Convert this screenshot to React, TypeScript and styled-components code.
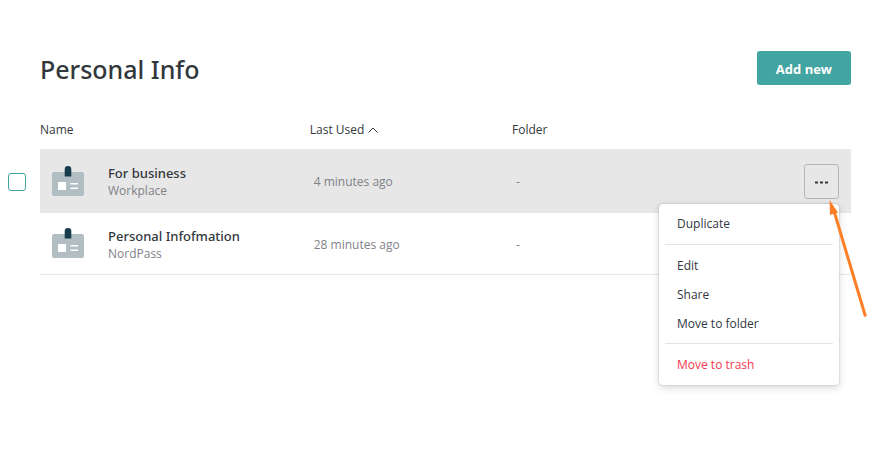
import React from "react";
import styled, { createGlobalStyle } from "styled-components";

const headingFont = '"Noto Sans", "Open Sans", sans-serif';

const GlobalStyle = createGlobalStyle`
  * { box-sizing: border-box; }
  body {
    margin: 0;
    background: #fff;
    color: #32373c;
    font-family: "Open Sans", "Noto Sans", sans-serif;
    font-size: 12px;
    font-weight: 500;
  }
  button { font: inherit; cursor: pointer; }
`;

const Page = styled.main`
  min-height: 100vh;
  padding: 48px 31px 48px 8px;
`;

const Header = styled.header`
  display: flex;
  align-items: center;
  justify-content: space-between;
  height: 40px;
  padding-left: 32px;
`;

const Title = styled.h1`
  margin: 0;
  padding-top: 2px;
  font-family: ${headingFont};
  font-size: 25px;
  line-height: 40px;
  font-weight: 500;
`;

const AddButton = styled.button`
  height: 34px;
  padding: 1px 19px 0;
  border: 0;
  border-radius: 3px;
  background: #43a5a2;
  color: #fff;
  font-size: 13px;
  font-weight: 700;
`;

const Table = styled.table`
  width: 100%;
  margin-top: 24px;
  border-collapse: separate;
  border-spacing: 0;
  table-layout: fixed;
`;

const HeadCell = styled.th<{ $width?: string; $plain?: boolean }>`
  width: ${(p) => p.$width ?? "auto"};
  height: 38px;
  padding: 0 0 2px;
  border-bottom: ${(p) => (p.$plain ? "0" : "1px solid #e7e7e7")};
  text-align: left;
  vertical-align: middle;
  font-weight: 500;
  line-height: 16px;
`;

const SortButton = styled.button`
  display: flex;
  align-items: center;
  gap: 4px;
  padding: 0;
  border: 0;
  background: none;
  color: inherit;
`;

const Cell = styled.td<{ $active?: boolean; $inset?: number }>`
  height: ${(p) => (p.$active ? 63 : 62)}px;
  padding: 1px 0 0 ${(p) => p.$inset ?? 4}px;
  border-bottom: 1px solid #e7e7e7;
  background: ${(p) => (p.$active ? "#e7e7e7" : "#fff")};
  color: #7f8288;
`;

const CheckCell = styled.td`
  padding: 0;
`;

const Checkbox = styled.input`
  display: block;
  appearance: none;
  width: 18px;
  height: 18px;
  margin: 0;
  border: 1px solid #43a5a2;
  border-radius: 3px;
  background: #fff;
  &:checked { background: #43a5a2; }
`;

const Item = styled.div`
  display: flex;
  align-items: center;
  gap: 24px;
`;

const ItemText = styled.div`
  padding-top: 1px;
  line-height: 18px;
`;

const ItemName = styled.div`
  color: #32373c;
  font-family: ${headingFont};
  font-size: 13px;
`;

const Actions = styled.div`
  position: relative;
  width: 35px;
`;

const MoreButton = styled.button`
  display: flex;
  align-items: center;
  justify-content: center;
  width: 35px;
  height: 35px;
  padding: 2px 0 0;
  border: 1px solid #b5b5b5;
  border-radius: 3px;
  background: transparent;
`;

const Menu = styled.div`
  position: absolute;
  z-index: 1;
  top: 40px;
  right: 0;
  width: 180px;
  padding: 5px 6px 6px;
  border-radius: 4px;
  background: #fff;
  box-shadow: 0 0 2px rgba(0, 0, 0, 0.25), 0 3px 8px rgba(0, 0, 0, 0.15);
`;

const MenuItem = styled.button<{ $danger?: boolean }>`
  display: block;
  width: 100%;
  height: 29px;
  padding: 0 12px;
  border: 0;
  background: none;
  color: ${(p) => (p.$danger ? "#f5384f" : "#32373f")};
  text-align: left;
`;

const Divider = styled.hr`
  height: 1px;
  margin: 6px 0;
  border: 0;
  background: #e4e4e4;

  &:last-of-type { margin-top: 5px; }
`;

const Pointer = styled.svg`
  position: absolute;
  z-index: 2;
  top: 35px;
  left: 23px;
  pointer-events: none;
`;

const CardIcon = () => (
  <svg width="32" height="32" viewBox="0 0 32 32" aria-hidden="true">
    <rect y="6" width="32" height="24" rx="2" fill="#b2bec4" />
    <path d="M12.7 10.5V3.3a3.3 3.3 0 0 1 6.6 0v7.2z" fill="#173d4c" />
    <path d="M6 16h8v8H6zM18.5 17h7.5v1.4h-7.5zM18.5 21.6h7.5V23h-7.5z" fill="#fff" />
  </svg>
);

const entries = [
  { name: "For business", detail: "Workplace", used: "4 minutes ago", active: true },
  { name: "Personal Infofmation", detail: "NordPass", used: "28 minutes ago", active: false },
];

const ActionMenu = () => (
  <Actions>
    <MoreButton type="button" aria-label="More actions" aria-haspopup="menu" aria-expanded="true">
      <svg width="15" height="3" viewBox="0 0 15 3" aria-hidden="true">
        <path d="M1 0.5h3v2H1zM6 0.5h3v2H6zM11 0.5h3v2h-3z" fill="#32373c" />
      </svg>
    </MoreButton>
    <Menu role="menu">
      <MenuItem role="menuitem">Duplicate</MenuItem>
      <Divider />
      <MenuItem role="menuitem">Edit</MenuItem>
      <MenuItem role="menuitem">Share</MenuItem>
      <MenuItem role="menuitem">Move to folder</MenuItem>
      <Divider />
      <MenuItem role="menuitem" $danger>Move to trash</MenuItem>
    </Menu>
    <Pointer width="42" height="120" viewBox="0 0 42 120" aria-hidden="true">
      <path d="M7 12L38.5 117.5" stroke="#ff7f27" strokeWidth="3" />
      <path d="M2.5 1L3 16L11 13.5z" fill="#ff7f27" />
    </Pointer>
  </Actions>
);

export default function App() {
  return (
    <>
      <GlobalStyle />
      <Page>
        <Header>
          <Title>Personal Info</Title>
          <AddButton type="button">Add new</AddButton>
        </Header>
        <Table>
          <thead>
            <tr>
              <HeadCell as="td" $width="32px" $plain />
              <HeadCell $width="32%">Name</HeadCell>
              <HeadCell $width="24%" aria-sort="ascending">
                <SortButton type="button">
                  Last Used
                  <svg width="10" height="6" viewBox="0 0 10 6" fill="none" stroke="#32373c" aria-hidden="true">
                    <path d="M0.5 5.5L5 1L9.5 5.5" />
                  </svg>
                </SortButton>
              </HeadCell>
              <HeadCell>Folder</HeadCell>
              <HeadCell as="td" $width="47px" />
            </tr>
          </thead>
          <tbody>
            {entries.map(({ name, detail, used, active }) => (
              <tr key={name}>
                <CheckCell>
                  {active && <Checkbox type="checkbox" aria-label={`Select ${name}`} />}
                </CheckCell>
                <Cell $active={active} $inset={12}>
                  <Item>
                    <CardIcon />
                    <ItemText>
                      <ItemName>{name}</ItemName>
                      <div>{detail}</div>
                    </ItemText>
                  </Item>
                </Cell>
                <Cell $active={active}>{used}</Cell>
                <Cell $active={active}>-</Cell>
                <Cell $active={active} $inset={0}>{active && <ActionMenu />}</Cell>
              </tr>
            ))}
          </tbody>
        </Table>
      </Page>
    </>
  );
}
